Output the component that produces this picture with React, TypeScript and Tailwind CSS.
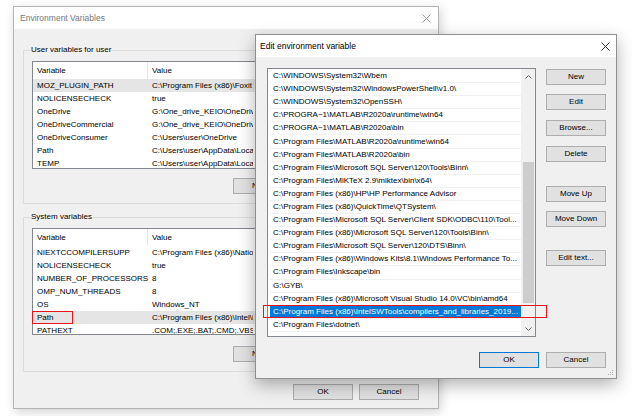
import React from 'react';

const userVars: [string, string][] = [
  ['MOZ_PLUGIN_PATH', 'C:\\Program Files (x86)\\Foxit Software\\Foxit Reader\\plugins\\'],
  ['NOLICENSECHECK', 'true'],
  ['OneDrive', 'G:\\One_drive_KEIO\\OneDrive'],
  ['OneDriveCommercial', 'G:\\One_drive_KEIO\\OneDrive - Keio University'],
  ['OneDriveConsumer', 'C:\\Users\\user\\OneDrive'],
  ['Path', 'C:\\Users\\user\\AppData\\Local\\Microsoft\\WindowsApps;'],
  ['TEMP', 'C:\\Users\\user\\AppData\\Local\\Temp'],
];

const systemVars: [string, string][] = [
  ['NIEXTCCOMPILERSUPP', 'C:\\Program Files (x86)\\National Instruments\\Shared\\'],
  ['NOLICENSECHECK', 'true'],
  ['NUMBER_OF_PROCESSORS', '8'],
  ['OMP_NUM_THREADS', '8'],
  ['OS', 'Windows_NT'],
  ['Path', 'C:\\Program Files (x86)\\Intel\\iCLS Client\\;'],
  ['PATHEXT', '.COM;.EXE;.BAT;.CMD;.VBS;.VBE;.JS;.JSE;'],
];

const paths = [
  'C:\\WINDOWS\\System32\\Wbem',
  'C:\\WINDOWS\\System32\\WindowsPowerShell\\v1.0\\',
  'C:\\WINDOWS\\System32\\OpenSSH\\',
  'C:\\PROGRA~1\\MATLAB\\R2020a\\runtime\\win64',
  'C:\\PROGRA~1\\MATLAB\\R2020a\\bin',
  'C:\\Program Files\\MATLAB\\R2020a\\runtime\\win64',
  'C:\\Program Files\\MATLAB\\R2020a\\bin',
  'C:\\Program Files\\Microsoft SQL Server\\120\\Tools\\Binn\\',
  'C:\\Program Files\\MiKTeX 2.9\\miktex\\bin\\x64\\',
  'C:\\Program Files (x86)\\HP\\HP Performance Advisor',
  'C:\\Program Files (x86)\\QuickTime\\QTSystem\\',
  'C:\\Program Files\\Microsoft SQL Server\\Client SDK\\ODBC\\110\\Tool...',
  'C:\\Program Files (x86)\\Microsoft SQL Server\\120\\Tools\\Binn\\',
  'C:\\Program Files\\Microsoft SQL Server\\120\\DTS\\Binn\\',
  'C:\\Program Files (x86)\\Windows Kits\\8.1\\Windows Performance To...',
  'C:\\Program Files\\Inkscape\\bin',
  'G:\\GYB\\',
  'C:\\Program Files (x86)\\Microsoft Visual Studio 14.0\\VC\\bin\\amd64',
  'C:\\Program Files (x86)\\IntelSWTools\\compilers_and_libraries_2019...',
  'C:\\Program Files\\dotnet\\',
];

function CloseX({ color }: { color: string }) {
  return (
    <svg width="9" height="9" viewBox="0 0 9 9">
      <path d="M0.5 0.5 L8.5 8.5 M8.5 0.5 L0.5 8.5" stroke={color} strokeWidth="1" />
    </svg>
  );
}

function Btn({ label, primary }: { label: string; primary?: boolean }) {
  return (
    <div
      className={`w-[60px] h-[16px] shrink-0 flex items-center justify-center bg-[#e1e1e1] text-[8px] text-black border ${
        primary ? 'border-[#0078d7]' : 'border-[#adadad]'
      }`}
    >
      {label}
    </div>
  );
}

// the value column is cut where the dialog covers it
function VarList({ rows, selected, height }: { rows: [string, string][]; selected: number; height: number }) {
  return (
    <div className="bg-white border border-[#828790] overflow-hidden" style={{ height }}>
      <div className="flex h-[17px] items-center text-[8px] text-black">
        <div className="w-[115px] pl-[4px] border-r border-[#e5e5e5] h-full flex items-center">Variable</div>
        <div className="pl-[4px]">Value</div>
      </div>
      {rows.map(([name, value], i) => (
        <div
          key={name + i}
          className={`flex h-[13px] items-center text-[8px] text-black whitespace-nowrap ${
            i === selected ? 'bg-[#e5e5e5]' : ''
          }`}
        >
          <div className="w-[116px] pl-[4px] shrink-0">{name}</div>
          <div className="pl-[3px] w-[104px] overflow-hidden">{value}</div>
        </div>
      ))}
    </div>
  );
}

function Group({ title, children }: { title: string; children: React.ReactNode }) {
  return (
    <fieldset className="border border-[#dcdcdc] pl-[8px] pr-[8px] pb-[9px]">
      <legend className="-ml-[2px] px-[1px] text-[8px] leading-[12px] text-black">{title}</legend>
      {children}
    </fieldset>
  );
}

function Chevron({ up }: { up?: boolean }) {
  return (
    <svg width="7" height="4" viewBox="0 0 7 4">
      <path d={up ? 'M0.5 3.5 L3.5 0.5 L6.5 3.5' : 'M0.5 0.5 L3.5 3.5 L6.5 0.5'} stroke="#606060" fill="none" strokeWidth="1" />
    </svg>
  );
}

export default function App() {
  return (
    <div className="relative w-[634px] h-[416px] bg-white overflow-hidden font-['Liberation_Sans',Arial,sans-serif]">
      {/* Environment Variables window */}
      <div className="absolute left-[13px] top-[6px] w-[426px] h-[403px] flex flex-col border border-[#b4b4b4] shadow-[2px_3px_10px_rgba(0,0,0,0.18)]">
        <div className="h-[22px] bg-white flex items-center justify-between pl-[6px] pr-[7px] text-[8.5px] text-[#777]">
          <span>Environment Variables</span>
          <CloseX color="#9a9a9a" />
        </div>
        <div className="flex-1 bg-[#f0f0f0] px-[9px] pt-[15px] flex flex-col">
          <Group title="User variables for user">
            <div className="mt-[5px]">
              <VarList rows={userVars} selected={0} height={108} />
            </div>
            <div className="mt-[9px] flex pl-[201px]">
              <Btn label="New..." />
            </div>
          </Group>
          <div className="mt-[7px]">
            <Group title="System variables">
              <div className="mt-[5px]">
                <VarList rows={systemVars} selected={5} height={107} />
              </div>
              <div className="mt-[11px] flex pl-[201px]">
                <Btn label="New..." />
              </div>
            </Group>
          </div>
          <div className="mt-[12px] flex justify-end gap-[6px] pr-[10px]">
            <Btn label="OK" />
            <Btn label="Cancel" />
          </div>
        </div>
      </div>

      {/* Edit environment variable dialog */}
      <div className="absolute left-[255px] top-[34px] w-[362px] h-[345px] flex flex-col border border-[#8f8f8f] shadow-[0_6px_16px_rgba(0,0,0,0.3)]">
        <div className="h-[22px] bg-white flex items-center justify-between pl-[4px] pr-[6px] text-[8.5px] text-black">
          <span>Edit environment variable</span>
          <CloseX color="#333" />
        </div>
        <div className="relative flex-1 bg-[#f0f0f0] pl-[11px] pr-[10px] pt-[11px] flex flex-col">
          <div className="flex gap-[10px]">
            <div className="w-[270px] h-[269px] bg-white border border-[#828790] flex">
              <div className="flex-1 pt-[1px] pl-[2px] overflow-hidden">
                {paths.map((p, i) => (
                  <div
                    key={p}
                    className={`h-[13.1px] flex items-center pl-[3px] text-[8px] whitespace-nowrap border-b border-[#f2f2f2] ${
                      i === 18 ? 'bg-[#0078d7] text-white' : 'text-black'
                    }`}
                  >
                    {p}
                  </div>
                ))}
              </div>
              <div className="w-[14px] bg-[#f0f0f0] flex flex-col items-center">
                <div className="h-[16px] flex items-center justify-center">
                  <Chevron up />
                </div>
                <div className="mt-[77px] w-[11px] h-[141px] bg-[#cdcdcd]" />
                <div className="flex-1" />
                <div className="h-[14px] flex items-center justify-center">
                  <Chevron />
                </div>
              </div>
            </div>
            <div className="flex flex-col pt-[1px]">
              <Btn label="New" />
              <div className="mt-[9px]"><Btn label="Edit" /></div>
              <div className="mt-[10px]"><Btn label="Browse..." /></div>
              <div className="mt-[10px]"><Btn label="Delete" /></div>
              <div className="mt-[24px]"><Btn label="Move Up" /></div>
              <div className="mt-[9px]"><Btn label="Move Down" /></div>
              <div className="mt-[23px]"><Btn label="Edit text..." /></div>
            </div>
          </div>
          <div className="mt-[15px] flex justify-end gap-[7px]">
            <Btn label="OK" primary />
            <Btn label="Cancel" />
          </div>
          <svg className="absolute right-[2px] bottom-[2px]" width="6" height="6" viewBox="0 0 6 6">
            <rect x="4" y="0" width="1" height="1" fill="#b0b0b0" />
            <rect x="2" y="2" width="1" height="1" fill="#b0b0b0" />
            <rect x="4" y="2" width="1" height="1" fill="#b0b0b0" />
            <rect x="0" y="4" width="1" height="1" fill="#b0b0b0" />
            <rect x="2" y="4" width="1" height="1" fill="#b0b0b0" />
            <rect x="4" y="4" width="1" height="1" fill="#b0b0b0" />
          </svg>
        </div>
      </div>

      {/* red annotation boxes */}
      <div className="absolute left-[32px] top-[311px] w-[41px] h-[13px] border-[1.5px] border-[#e8141c]" />
      <div className="absolute left-[263px] top-[305px] w-[284px] h-[13px] border-[1.5px] border-[#e8141c]" />
    </div>
  );
}
